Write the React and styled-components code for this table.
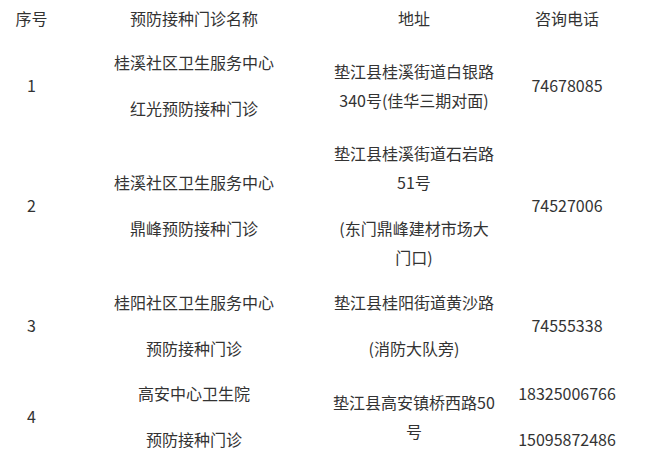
import React from "react";
import styled, { createGlobalStyle } from "styled-components";

const Global = createGlobalStyle`
  html, body {
    margin: 0;
    padding: 0;
    background: #ffffff;
  }
  body {
    font-family: "Noto Sans CJK SC", "Noto Sans", sans-serif;
    color: #333333;
  }
`;

const Table = styled.table`
  border-collapse: collapse;
  table-layout: fixed;
  width: 631px;
  font-size: 16px;
  line-height: 29px;
  color: #333333;
`;

const Col = styled.col`
  width: ${(p) => p.$w}px;
`;

const HeadCell = styled.th`
  font-weight: normal;
  text-align: center;
  vertical-align: middle;
  padding: 4px 7px 7px;
  white-space: nowrap;
`;

const Cell = styled.td`
  text-align: center;
  vertical-align: middle;
  padding: 8px 7px;
`;

const Stack = styled.div`
  display: flex;
  flex-direction: column;
  align-items: center;
  gap: 17px;
`;

const Para = styled.p`
  margin: 0;
`;

const rows = [
  {
    no: "1",
    name: ["桂溪社区卫生服务中心", "红光预防接种门诊"],
    addr: ["垫江县桂溪街道白银路340号(佳华三期对面)"],
    tel: ["74678085"],
  },
  {
    no: "2",
    name: ["桂溪社区卫生服务中心", "鼎峰预防接种门诊"],
    addr: ["垫江县桂溪街道石岩路51号", "(东门鼎峰建材市场大门口)"],
    tel: ["74527006"],
  },
  {
    no: "3",
    name: ["桂阳社区卫生服务中心", "预防接种门诊"],
    addr: ["垫江县桂阳街道黄沙路", "(消防大队旁)"],
    tel: ["74555338"],
  },
  {
    no: "4",
    name: ["高安中心卫生院", "预防接种门诊"],
    addr: ["垫江县高安镇桥西路50号"],
    tel: ["18325006766", "15095872486"],
  },
];

const Lines = ({ items }) => (
  <Stack>
    {items.map((t, i) => (
      <Para key={i}>{t}</Para>
    ))}
  </Stack>
);

export default function App() {
  return (
    <>
      <Global />
      <Table>
        <colgroup>
          <Col $w={63} />
          <Col $w={262} />
          <Col $w={178} />
          <Col $w={128} />
        </colgroup>
        <thead>
          <tr>
            <HeadCell>序号</HeadCell>
            <HeadCell>预防接种门诊名称</HeadCell>
            <HeadCell>地址</HeadCell>
            <HeadCell>咨询电话</HeadCell>
          </tr>
        </thead>
        <tbody>
          {rows.map((r) => (
            <tr key={r.no}>
              <Cell>{r.no}</Cell>
              <Cell>
                <Lines items={r.name} />
              </Cell>
              <Cell>
                <Lines items={r.addr} />
              </Cell>
              <Cell>
                <Lines items={r.tel} />
              </Cell>
            </tr>
          ))}
        </tbody>
      </Table>
    </>
  );
}
